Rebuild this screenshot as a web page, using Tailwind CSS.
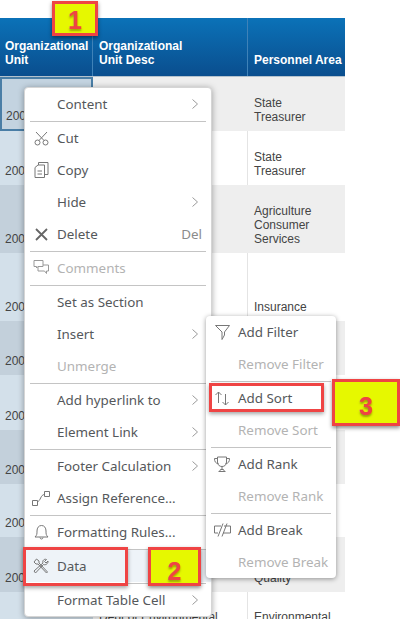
<!DOCTYPE html>
<html lang="en">
<head>
    <meta charset="UTF-8" />
    <title>Table context menu</title>
    <script src="https://cdn.jsdelivr.net/npm/@tailwindcss/browser@4"></script>
</head>
<body class="bg-white">
<div class="relative w-[400px] h-[619px] overflow-hidden font-['Liberation_Sans',sans-serif] text-[12px] leading-[14px] text-[#444]">

    <!-- table -->
    <div class="w-[345px] pt-[18px]">
        <div class="flex h-[59px] items-end bg-gradient-to-b from-[#0b72b8] to-[#0a4e8e] border-b border-[#b4c2cd] font-bold text-white">
            <div class="w-[93px] h-full flex items-end pl-[5px] pb-[9px] border-r border-[#3f82b8]">Organizational<br>Unit</div>
            <div class="w-[155px] h-full flex items-end pl-[6px] pb-[9px] border-r border-[#3f82b8]">Organizational<br>Unit Desc</div>
            <div class="flex-1 pl-[6px] pb-[9px]">Personnel Area</div>
        </div>

        <div class="flex h-[54px] bg-[#eeeeee]">
            <div class="w-[93px] flex items-end pl-[4px] pb-[6px] bg-[#c3d3e0] border-2 border-[#4a7ea6]">200</div>
            <div class="w-[155px]"></div>
            <div class="flex-1 flex items-end pl-[6px] pb-[7px]">State<br>Treasurer</div>
        </div>
        <div class="flex h-[54px] bg-white">
            <div class="w-[93px] flex items-end pl-[5px] pb-[7px] bg-[#d3e0ea]">200</div>
            <div class="w-[155px] border-r border-[#e4e4e4]"></div>
            <div class="flex-1 flex items-end pl-[6px] pb-[7px]">State<br>Treasurer</div>
        </div>
        <div class="flex h-[68px] bg-[#eeeeee]">
            <div class="w-[93px] flex items-end pl-[5px] pb-[7px] bg-[#c3d0db]">200</div>
            <div class="w-[155px]"></div>
            <div class="flex-1 flex items-end pl-[6px] pb-[7px]">Agriculture<br>Consumer<br>Services</div>
        </div>
        <div class="flex h-[68px] bg-white">
            <div class="w-[93px] flex items-end pl-[5px] pb-[7px] bg-[#d3e0ea]">200</div>
            <div class="w-[155px] border-r border-[#e4e4e4]"></div>
            <div class="flex-1 flex items-end pl-[6px] pb-[7px]">Insurance</div>
        </div>
        <div class="flex h-[54px] bg-[#eeeeee]">
            <div class="w-[93px] flex items-end pl-[5px] pb-[7px] bg-[#c3d0db]">200</div>
            <div class="w-[155px]"></div>
            <div class="flex-1"></div>
        </div>
        <div class="flex h-[55px] bg-white">
            <div class="w-[93px] flex items-end pl-[5px] pb-[7px] bg-[#d3e0ea]">200</div>
            <div class="w-[155px] border-r border-[#e4e4e4]"></div>
            <div class="flex-1"></div>
        </div>
        <div class="flex h-[54px] bg-[#eeeeee]">
            <div class="w-[93px] flex items-end pl-[5px] pb-[7px] bg-[#c3d0db]">200</div>
            <div class="w-[155px]"></div>
            <div class="flex-1"></div>
        </div>
        <div class="flex h-[53px] bg-white">
            <div class="w-[93px] flex items-end pl-[5px] pb-[7px] bg-[#d3e0ea]">200</div>
            <div class="w-[155px] border-r border-[#e4e4e4]"></div>
            <div class="flex-1"></div>
        </div>
        <div class="flex h-[55px] bg-[#eeeeee]">
            <div class="w-[93px] flex items-end pl-[5px] pb-[7px] bg-[#c3d0db]">200</div>
            <div class="w-[155px]"></div>
            <div class="flex-1 flex items-end pl-[6px] pb-[7px]">Quality</div>
        </div>
        <div class="flex h-[68px] bg-white">
            <div class="w-[93px] bg-[#d3e0ea]"></div>
            <div class="w-[155px] pl-[6px] pt-[18px] border-r border-[#e4e4e4]">Dept of Environmental</div>
            <div class="flex-1 pl-[6px] pt-[18px]">Environmental</div>
        </div>
    </div>

    <!-- context menu -->
    <div class="absolute left-[25px] top-[88px] w-[186px] rounded-[4px] bg-white border border-[#d5d5d5] shadow-[0_1px_6px_rgba(0,0,0,0.35)] font-['Noto_Sans',sans-serif] text-[13.4px] text-[#55585b] box-content -ml-px -mt-px">
        <div class="flex items-center h-8 pl-8 pr-[13px] justify-between">Content
            <svg class="w-[6px] h-[10px]" viewBox="0 0 6 10" fill="none" stroke="#9a9a9a"><path d="M.5.5 5.5 5 .5 9.5"/></svg>
        </div>
        <div class="mx-[5px] my-[0.5px] h-px bg-[#c4c4c4]"></div>

        <div class="flex items-center h-8">
            <div class="w-8 flex justify-center">
                <svg class="w-[15px] h-[15px]" viewBox="0 0 15 15" fill="none" stroke="#777" stroke-width="1"><circle cx="3.5" cy="11.5" r="2.5"/><circle cx="11.5" cy="11.5" r="2.5"/><path d="M2 1l8 8.5M13 1 5 9.5"/></svg>
            </div>Cut
        </div>
        <div class="flex items-center h-8">
            <div class="w-8 flex justify-center">
                <svg class="w-[15px] h-[16px]" viewBox="0 0 15 16" fill="none" stroke="#777" stroke-width="1"><path d="M1 5.5 4 3h6.500v12.500H1z"/><path d="M4.500 3V.5H14v12h-3.500M3.500 9h4.500M3.500 12h4.500"/></svg>
            </div>Copy
        </div>
        <div class="flex items-center h-8 pl-8 pr-[13px] justify-between">Hide
            <svg class="w-[6px] h-[10px]" viewBox="0 0 6 10" fill="none" stroke="#9a9a9a"><path d="M.5.5 5.5 5 .5 9.5"/></svg>
        </div>
        <div class="flex items-center h-8 pr-[9px]">
            <div class="w-8 flex justify-center">
                <svg class="w-[13px] h-[13px]" viewBox="0 0 13 13" fill="none" stroke="#666" stroke-width="1.800"><path d="M1 1l11 11M12 1 1 12"/></svg>
            </div>Delete<span class="ml-auto text-[#8b8b8b]">Del</span>
        </div>
        <div class="mx-[5px] my-[0.5px] h-px bg-[#c4c4c4]"></div>

        <div class="flex items-center h-8 text-[#b3b3b3]">
            <div class="w-8 flex justify-center">
                <svg class="w-[16px] h-[16px]" viewBox="0 0 16 16" fill="none" stroke="#999" stroke-width="1"><path d="M1 .5h9v6H5L3.500 8V6.500H1zM5 6.500V11h6.500l2 2.500V11h2V5h-5.500"/></svg>
            </div>Comments
        </div>
        <div class="mx-[5px] my-[0.5px] h-px bg-[#c4c4c4]"></div>

        <div class="flex items-center h-8 pl-8">Set as Section</div>
        <div class="flex items-center h-8 pl-8 pr-[13px] justify-between">Insert
            <svg class="w-[6px] h-[10px]" viewBox="0 0 6 10" fill="none" stroke="#9a9a9a"><path d="M.5.5 5.5 5 .5 9.5"/></svg>
        </div>
        <div class="flex items-center h-8 pl-8 text-[#b3b3b3]">Unmerge</div>
        <div class="mx-[5px] my-[0.5px] h-px bg-[#c4c4c4]"></div>

        <div class="flex items-center h-8 pl-8 pr-[13px] justify-between">Add hyperlink to
            <svg class="w-[6px] h-[10px]" viewBox="0 0 6 10" fill="none" stroke="#9a9a9a"><path d="M.5.5 5.5 5 .5 9.5"/></svg>
        </div>
        <div class="flex items-center h-8 pl-8 pr-[13px] justify-between">Element Link
            <svg class="w-[6px] h-[10px]" viewBox="0 0 6 10" fill="none" stroke="#9a9a9a"><path d="M.5.5 5.5 5 .5 9.5"/></svg>
        </div>
        <div class="mx-[5px] my-[0.5px] h-px bg-[#c4c4c4]"></div>

        <div class="flex items-center h-8 pl-8 pr-[13px] justify-between">Footer Calculation
            <svg class="w-[6px] h-[10px]" viewBox="0 0 6 10" fill="none" stroke="#9a9a9a"><path d="M.5.5 5.5 5 .5 9.5"/></svg>
        </div>
        <div class="flex items-center h-8">
            <div class="w-8 flex justify-center">
                <svg class="w-[18px] h-[15px]" viewBox="0 0 18 15" fill="none" stroke="#777" stroke-width="1"><path d="M.5 9.500h5v5h-5zM12.500.5h5v5h-5zM5.500 10.500c3 0 3-7 7-7"/></svg>
            </div>Assign Reference...
        </div>
        <div class="mx-[5px] my-[0.5px] h-px bg-[#c4c4c4]"></div>

        <div class="flex items-center h-8">
            <div class="w-8 flex justify-center">
                <svg class="w-[15px] h-[16px]" viewBox="0 0 15 16" fill="none" stroke="#777" stroke-width="1"><path d="M1 13h13c-2-2-2-3-2-6s-1.500-5.500-4.500-5.500S3 4 3 7s0 4-2 6zM6 13.500c0 2 3 2 3 0"/></svg>
            </div>Formatting Rules...
        </div>
        <div class="mx-[5px] my-[0.5px] h-px bg-[#c4c4c4]"></div>

        <div class="flex items-center h-8 bg-[#eef3f8]">
            <div class="w-8 flex justify-center">
                <svg class="w-[16px] h-[16px]" viewBox="0 0 16 16" fill="none" stroke="#777" stroke-width="1"><path d="M1 4 3.500 1l2.500 2 0 2L14.500 14l-1 1L5 6H3zM15 3l-2 2-1.500-1.500 2-2c-2-1-4.500 1-3.500 3.500L1 13l1.500 2L10.500 6.500c2 1 5-1 4.500-3.500z"/></svg>
            </div>Data
        </div>
        <div class="mx-[5px] my-[0.5px] h-px bg-[#c4c4c4]"></div>

        <div class="flex items-center h-8 pl-8 pr-[13px] justify-between">Format Table Cell
            <svg class="w-[6px] h-[10px]" viewBox="0 0 6 10" fill="none" stroke="#9a9a9a"><path d="M.5.5 5.5 5 .5 9.5"/></svg>
        </div>
    </div>

    <!-- submenu -->
    <div class="absolute left-[206px] top-[316px] w-[130px] rounded-[4px] bg-white shadow-[0_1px_5px_rgba(0,0,0,0.4)] font-['Noto_Sans',sans-serif] text-[13.4px] text-[#55585b]">
        <div class="flex items-center h-8">
            <div class="w-8 flex justify-center">
                <svg class="w-[15px] h-[15px]" viewBox="0 0 15 15" fill="none" stroke="#777" stroke-width="1"><path d="M.5.5h14L9.500 7v3l-2.500 4.500V7z"/></svg>
            </div>Add Filter
        </div>
        <div class="flex items-center h-8 pl-8 text-[#b3b3b3]">Remove Filter</div>
        <div class="mx-[5px] my-[0.5px] h-px bg-[#c4c4c4]"></div>

        <div class="flex items-center h-8">
            <div class="w-8 flex justify-center">
                <svg class="w-[16px] h-[15px]" viewBox="0 0 16 15" fill="none" stroke="#777" stroke-width="1"><path d="M4.500 12V1M1.500 4l3-3 3 3M11.500 3v11M8.500 11l3 3 3-3"/></svg>
            </div>Add Sort
        </div>
        <div class="flex items-center h-8 pl-8 text-[#b3b3b3]">Remove Sort</div>
        <div class="mx-[5px] my-[0.5px] h-px bg-[#c4c4c4]"></div>

        <div class="flex items-center h-8">
            <div class="w-8 flex justify-center">
                <svg class="w-[16px] h-[16px]" viewBox="0 0 16 16" fill="none" stroke="#777" stroke-width="1"><path d="M3.500 1h9v5c0 3-2 4.500-4.500 4.500S3.500 9 3.500 6zM3.500 2.500H.5c0 3 1 5 4 5M12.500 2.500h3c0 3-1 5-4 5M8 10.500v3M4.500 15.500h7M5.500 15.500l1-2h3l1 2"/></svg>
            </div>Add Rank
        </div>
        <div class="flex items-center h-8 pl-8 text-[#b3b3b3]">Remove Rank</div>
        <div class="mx-[5px] my-[0.5px] h-px bg-[#c4c4c4]"></div>

        <div class="flex items-center h-8">
            <div class="w-8 flex justify-center">
                <svg class="w-[17px] h-[14px]" viewBox="0 0 17 14" fill="none" stroke="#777" stroke-width="1"><path d="M7 3H.5v7H4M10 3h6.500v7H9M9 .5 4 13.500M13 .5 8 13.500"/></svg>
            </div>Add Break
        </div>
        <div class="flex items-center h-8 pl-8 text-[#b3b3b3]">Remove Break</div>
    </div>

    <!-- annotations -->
    <div class="absolute left-[52px] top-[1px] w-[46px] h-[35px] flex items-center justify-center pt-[3px] bg-[#e6f800] border-[3px] border-[#ef4444] shadow-[0_2px_4px_rgba(0,0,0,0.45)] font-['Liberation_Sans',sans-serif] font-bold text-[25px] text-[#ef4444] [text-shadow:0_2px_2px_rgba(90,90,0,0.5)]">1</div>
    <div class="absolute left-[23px] top-[547px] w-[105px] h-[39px] border-[3px] border-[#ef4444] shadow-[0_2px_4px_rgba(0,0,0,0.35)]"></div>
    <div class="absolute left-[148px] top-[547px] w-[53px] h-[39px] flex items-center justify-center pt-[8px] bg-[#e6f800] border-[3px] border-[#ef4444] shadow-[0_2px_4px_rgba(0,0,0,0.45)] font-['Liberation_Sans',sans-serif] font-bold text-[25px] text-[#ef4444] [text-shadow:0_2px_2px_rgba(90,90,0,0.5)]">2</div>
    <div class="absolute left-[209px] top-[383px] w-[115px] h-[29px] border-[3px] border-[#ef4444] shadow-[0_2px_4px_rgba(0,0,0,0.35)]"></div>
    <div class="absolute left-[332px] top-[379px] w-[68px] h-[47px] flex items-center justify-center pt-[6px] bg-[#e6f800] border-[3px] border-[#ef4444] shadow-[0_2px_4px_rgba(0,0,0,0.45)] font-['Liberation_Sans',sans-serif] font-bold text-[25px] text-[#ef4444] [text-shadow:0_2px_2px_rgba(90,90,0,0.5)]">3</div>
</div>
</body>
</html>
